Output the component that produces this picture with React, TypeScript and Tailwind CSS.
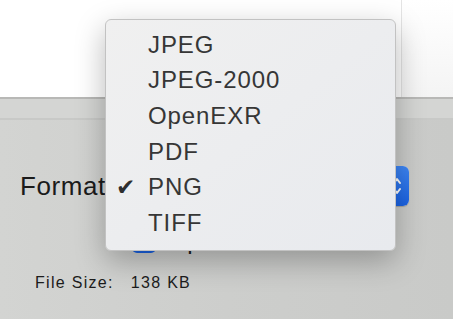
import React from 'react';

const formats = ['JPEG', 'JPEG-2000', 'OpenEXR', 'PDF', 'PNG', 'TIFF'];

export default function App() {
  const selected = 'PNG';

  return (
    <div className="relative w-[453px] h-[319px] overflow-hidden bg-white font-['Liberation_Sans',Arial,sans-serif]">
      {/* document area */}
      <div className="flex h-[97px]">
        <div className="w-[402px] border-r border-[#e4e4e4] bg-white" />
        <div className="flex-1 bg-gradient-to-b from-white to-[#f4f4f4]" />
      </div>

      {/* sheet header bars */}
      <div className="h-[2px] bg-[#b8b8b6]" />
      <div className="h-[19px] bg-[#d4d5d3]" />
      <div className="h-[2px] bg-[#c8c9c7]" />

      {/* export options */}
      <div className="h-[199px] bg-gradient-to-r from-[#d3d4d2] via-[#cdcecc] to-[#c9cac8] pt-[46px]">
        <div className="flex items-center h-[40px]">
          <span className="ml-[20px] text-[26px] tracking-[0.6px] text-[#1b1b1b]">Format</span>
          <div className="ml-[12px] flex h-[40px] w-[291px] rounded-[6px] bg-white shadow-[0_1px_1px_rgba(0,0,0,0.2)]">
            <div className="flex-1" />
            <div className="flex w-[24px] items-center justify-center rounded-r-[6px] bg-gradient-to-b from-[#3e86f5] to-[#1a62e3]">
              <svg width="10" height="20" viewBox="0 0 10 20" fill="none" stroke="white" strokeWidth="2" strokeLinecap="round" strokeLinejoin="round">
                <path d="M2 7 L5 3 L8 7" />
                <path d="M2 13 L5 17 L8 13" />
              </svg>
            </div>
          </div>
        </div>

        <div className="mt-[23px] flex items-center h-[24px]">
          <div className="ml-[132px] h-[24px] w-[24px] rounded-[5px] bg-gradient-to-b from-[#3e86f5] to-[#1a62e3]" />
          <span className="ml-[10px] text-[24px] text-[#1b1b1b]">Alpha</span>
        </div>

        <div className="mt-[18px] ml-[35px] flex text-[16px] tracking-[1.3px] text-[#1c1c1c]">
          <span>File Size:</span>
          <span className="ml-[17px]">138 KB</span>
        </div>
      </div>

      {/* popup menu */}
      <div className="absolute left-[105px] top-[19px] w-[291px] h-[232px] rounded-[6px] border border-[#c2c2c2] bg-gradient-to-br from-[#f0f0f0] to-[#e8eaee] pt-[7px] shadow-[0_10px_30px_rgba(0,0,0,0.28)]">
        {formats.map(f => (
          <div key={f} className="flex items-center h-[35.6px]">
            <span className="w-[42px] pl-[10px] font-['DejaVu_Sans',sans-serif] text-[23px] leading-none text-[#2e2e2e]">
              {f === selected ? '✔' : ''}
            </span>
            <span className="text-[24px] tracking-[0.9px] text-[#363636]">{f}</span>
          </div>
        ))}
      </div>
    </div>
  );
}
